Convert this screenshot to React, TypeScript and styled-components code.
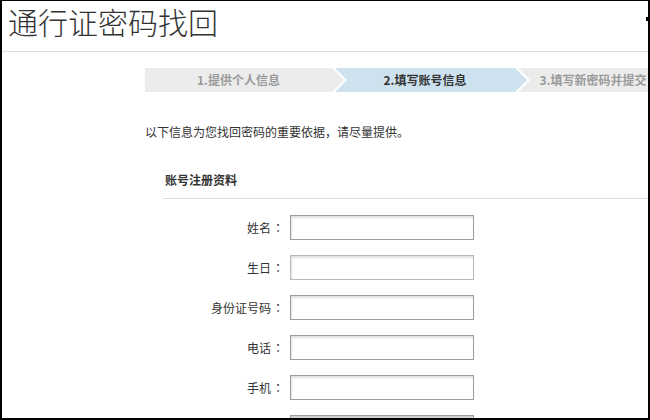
import * as React from "react";
import styled, { createGlobalStyle } from "styled-components";

const GlobalStyle = createGlobalStyle`
  html, body {
    margin: 0;
    padding: 0;
    background: #fff;
  }

  body {
    font-family: "Noto Sans CJK SC", "Liberation Sans", sans-serif;
  }
`;

const Frame = styled.div`
  position: relative;
  width: 650px;
  height: 420px;
  box-sizing: border-box;
  border-style: solid;
  border-color: #000;
  border-width: 1px 2px 2px 2px;
  overflow: hidden;
  background: #fff;

  &::after {
    content: "";
    position: absolute;
    top: 16px;
    right: 0;
    width: 2px;
    height: 4px;
    background: #000;
  }
`;

const Header = styled.div`
  height: 50px;
  padding-left: 6px;
  border-bottom: 1px solid #ddd;
`;

const Title = styled.h1`
  margin: 0;
  font-size: 30px;
  line-height: 40px;
  font-weight: 300;
  color: #333;
  white-space: nowrap;
`;

const StepBar = styled.div`
  display: flex;
  height: 24px;
  margin: 16px 0 0 143px;
  white-space: nowrap;
`;

const Step = styled.div<{ $active?: boolean; $first?: boolean; $width: number }>`
  flex: none;
  width: ${(p) => p.$width}px;
  height: 24px;
  margin-left: ${(p) => (p.$first ? 0 : -9)}px;
  padding-right: 12px;
  box-sizing: border-box;
  background: ${(p) => (p.$active ? "#cde1ef" : "#ececec")};
  color: ${(p) => (p.$active ? "#333" : "#9a9a9a")};
  font-size: 12px;
  font-weight: 700;
  line-height: 24px;
  text-align: center;
  clip-path: ${(p) =>
    p.$first
      ? "polygon(0 0, calc(100% - 12px) 0, 100% 50%, calc(100% - 12px) 100%, 0 100%)"
      : "polygon(0 0, calc(100% - 12px) 0, 100% 50%, calc(100% - 12px) 100%, 0 100%, 12px 50%)"};
`;

const Intro = styled.p`
  margin: 31px 0 0 143px;
  font-size: 12px;
  line-height: 18px;
  color: #333;
  white-space: nowrap;
`;

const Section = styled.div`
  margin: 30px 0 0 161px;
`;

const SectionTitle = styled.h2`
  margin: 0;
  padding: 0 0 9px 2px;
  font-size: 12px;
  line-height: 18px;
  font-weight: 700;
  color: #333;
  border-bottom: 1px solid #ddd;
`;

const Form = styled.div`
  display: grid;
  grid-template-columns: 122px 184px;
  column-gap: 5px;
  row-gap: 15px;
  padding-top: 16px;
`;

const Label = styled.label`
  font-size: 12px;
  line-height: 25px;
  color: #333;
  text-align: right;
  white-space: nowrap;
`;

/* fullwidth colon drawn centred in its cell, as the reference does */
const Colon = styled.span`
  display: inline-block;
  width: 14px;
  font-family: "Noto Sans CJK TC", "Noto Sans CJK SC", sans-serif;
  text-align: center;
`;

const Field = styled.input<{ $tone?: "light" | "filled" }>`
  width: 184px;
  height: 25px;
  box-sizing: border-box;
  margin: 0;
  padding: 0 4px;
  border: 1px solid ${(p) => (p.$tone === "light" ? "#b9b9b9" : "#9c9c9c")};
  border-radius: 0;
  background: ${(p) => (p.$tone === "filled" ? "#e9e9e9" : "#fff")};
  box-shadow: inset 1px 2px 2px rgba(0, 0, 0, 0.12);
  outline: none;
`;

const steps = [
  { text: "1.提供个人信息", width: 199 },
  { text: "2.填写账号信息", width: 192, active: true },
  { text: "3.填写新密码并提交", width: 162 },
];

const rows: { label: string; tone?: "light" | "filled" }[] = [
  { label: "姓名" },
  { label: "生日", tone: "light" },
  { label: "身份证号码" },
  { label: "电话" },
  { label: "手机" },
  { label: "", tone: "filled" },
];

const App: React.FC = () => {
  return (
    <>
      <GlobalStyle />
      <Frame>
        <Header>
          <Title>通行证密码找回</Title>
        </Header>
        <StepBar>
          {steps.map((s, i) => (
            <Step key={s.text} $first={i === 0} $active={s.active} $width={s.width}>
              {s.text}
            </Step>
          ))}
        </StepBar>
        <Intro>以下信息为您找回密码的重要依据，请尽量提供。</Intro>
        <Section>
          <SectionTitle>账号注册资料</SectionTitle>
          <Form>
            {rows.map((r, i) => (
              <React.Fragment key={i}>
                <Label>
                  {r.label}
                  {r.label && <Colon>：</Colon>}
                </Label>
                <Field type="text" $tone={r.tone} />
              </React.Fragment>
            ))}
          </Form>
        </Section>
      </Frame>
    </>
  );
};

export default App;
